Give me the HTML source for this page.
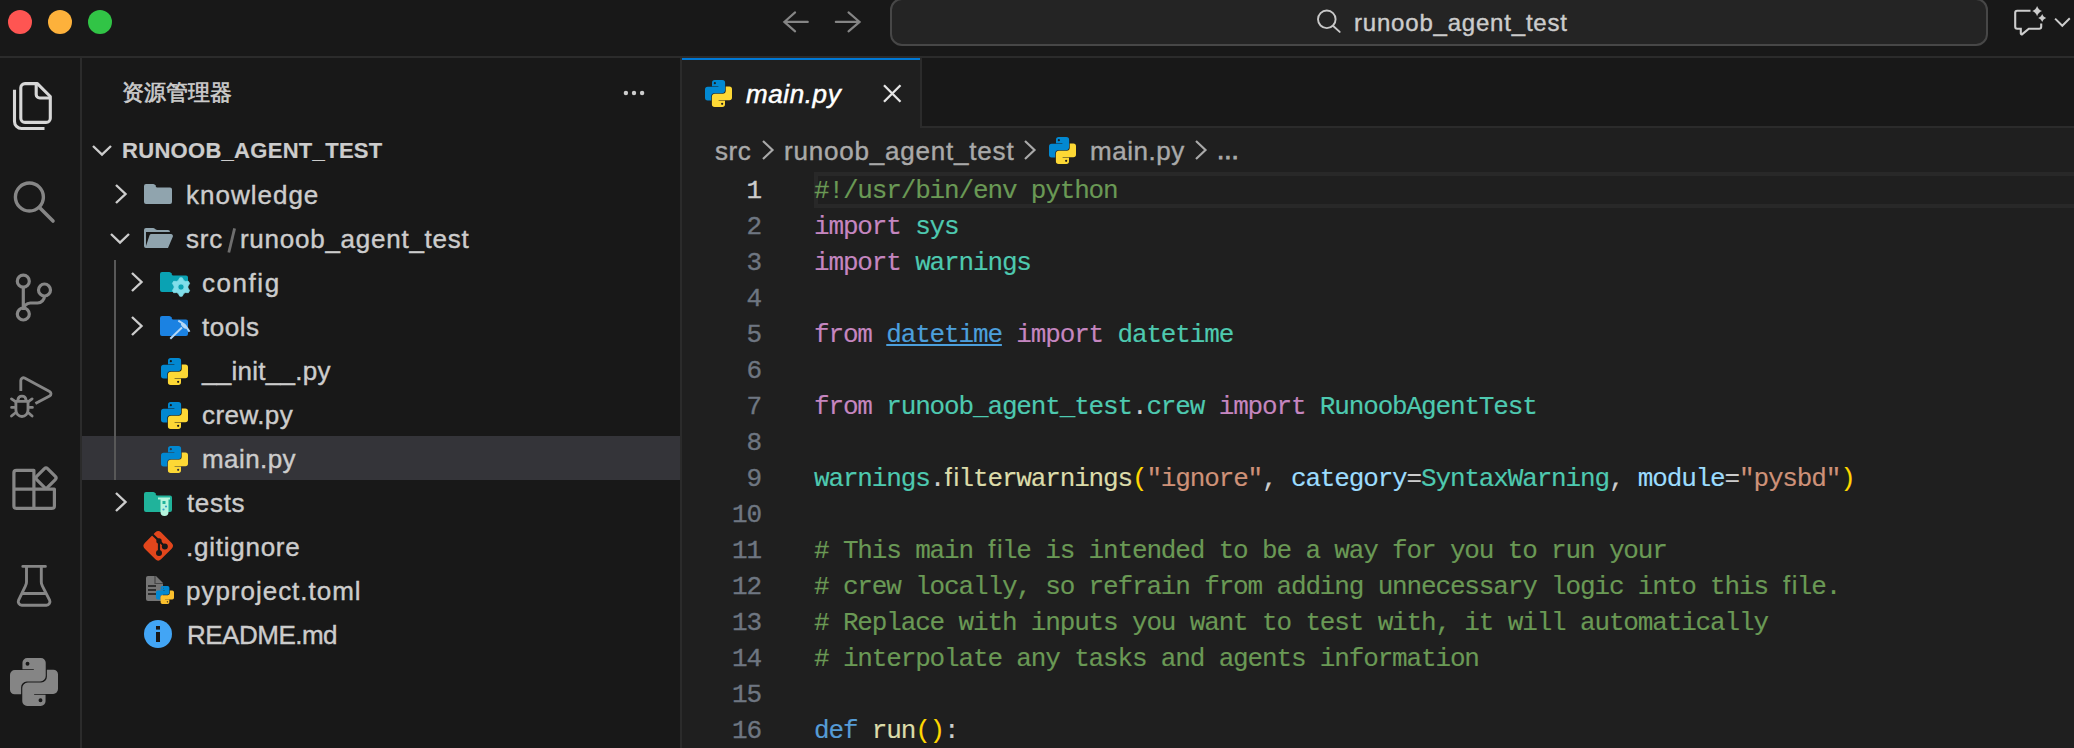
<!DOCTYPE html>
<html><head><meta charset="utf-8">
<style>
*{box-sizing:border-box;margin:0;padding:0}
html,body{width:2074px;height:748px;overflow:hidden;background:#181818}
body{position:relative;font-family:"Liberation Sans",sans-serif;color:#cccccc}
.abs{position:absolute}
svg{position:absolute;overflow:visible}
#titlebar{left:0;top:0;width:2074px;height:56px;background:#181818}
#tb-border{left:0;top:56px;width:2074px;height:2px;background:#2b2b2b}
.light{position:absolute;width:24px;height:24px;border-radius:50%;top:10px}
#cc{left:890px;top:-2px;width:1098px;height:48px;border:2px solid #474747;border-radius:12px;background:#242424}
#cc-text{left:1354px;top:6px;font-size:24px;line-height:34px;color:#cccccc;letter-spacing:0.8px;-webkit-text-stroke:0.4px #cccccc}
#actbar{left:0;top:58px;width:80px;height:690px;background:#181818}
#act-border{left:80px;top:58px;width:2px;height:690px;background:#2b2b2b}
#sidebar{left:82px;top:58px;width:598px;height:690px;background:#181818}
#side-border{left:680px;top:58px;width:2px;height:690px;background:#2b2b2b}
#editor{left:682px;top:58px;width:1392px;height:690px;background:#1f1f1f}
#tabbar{left:682px;top:58px;width:1392px;height:68px;background:#181818}
#tabbar-border{left:920px;top:126px;width:1154px;height:2px;background:#2b2b2b}
#tab{left:682px;top:58px;width:238px;height:70px;background:#1f1f1f}
#tab-top{left:682px;top:58px;width:238px;height:2px;background:#0078d4}
#tab-right{left:920px;top:58px;width:2px;height:68px;background:#2b2b2b}
.row{position:absolute;left:82px;width:598px;height:44px}
.lbl{position:absolute;font-size:26px;line-height:44px;top:0;padding-top:1px;letter-spacing:0.75px;color:#cccccc;white-space:pre;-webkit-text-stroke:0.4px currentColor}
.ui{-webkit-text-stroke:0.4px currentColor}
.code{position:absolute;left:814px;padding-top:1px;-webkit-text-stroke:0.15px currentColor;font-family:"Liberation Mono",monospace;font-size:26px;letter-spacing:-1.15px;line-height:36px;white-space:pre;color:#cccccc}
.ln{position:absolute;left:700px;width:61px;padding-top:1px;-webkit-text-stroke:0.35px currentColor;text-align:right;font-family:"Liberation Mono",monospace;font-size:26px;letter-spacing:-1.15px;line-height:36px;color:#6e7681}
.c{color:#6a9955}.k{color:#c586c0}.n{color:#4ec9b0}.f{color:#dcdcaa}.s{color:#ce9178}.p{color:#9cdcfe}.b{color:#ffd700}.d{color:#569cd6}.w{color:#cccccc}
.lnk{color:#4c9fdc;text-decoration:underline;text-underline-offset:2px;text-decoration-thickness:2px}
</style></head><body>
<div id="titlebar" class="abs"></div>
<div id="tb-border" class="abs"></div>
<div class="light" style="left:8px;background:#fe5552"></div>
<div class="light" style="left:48px;background:#fdb13b"></div>
<div class="light" style="left:88px;background:#31c446"></div>

<div id="actbar" class="abs"></div>
<div id="act-border" class="abs"></div>
<div id="sidebar" class="abs"></div>
<div id="side-border" class="abs"></div>
<div id="editor" class="abs"></div>
<div id="tabbar" class="abs"></div>
<div id="tabbar-border" class="abs"></div>
<div id="tab" class="abs"></div>
<div id="tab-top" class="abs"></div>
<div id="tab-right" class="abs"></div>

<div id="cc" class="abs"></div>
<div id="cc-text" class="abs">runoob_agent_test</div>

<!-- SIDEBAR -->
<div class="abs ui" style="left:122px;top:76px;font-size:22px;line-height:34px;color:#cccccc;-webkit-text-stroke:0.6px #cccccc">资源管理器</div>
<div class="abs ui" style="left:122px;top:129px;font-size:22px;line-height:44px;font-weight:bold;color:#cccccc;letter-spacing:0.3px;-webkit-text-stroke:0.2px #cccccc">RUNOOB_AGENT_TEST</div>

<div class="row" style="top:436px;background:#343439"></div>
<div class="abs" style="left:114px;top:260px;width:2px;height:220px;background:#585858"></div>

<div class="lbl" style="left:186px;top:172px;letter-spacing:1px">knowledge</div>
<div class="lbl" style="left:186px;top:216px">src<span style="display:inline-block;width:17px"></span>runoob_agent_test</div>
<div class="lbl" style="left:202px;top:260px;letter-spacing:1.55px">config</div>
<div class="lbl" style="left:202px;top:304px;letter-spacing:0.5px">tools</div>
<div class="lbl" style="left:202px;top:348px;letter-spacing:0.28px">__init__.py</div>
<div class="lbl" style="left:202px;top:392px;letter-spacing:0.42px">crew.py</div>
<div class="lbl" style="left:202px;top:436px;letter-spacing:0.42px">main.py</div>
<div class="lbl" style="left:187px;top:480px;letter-spacing:0.65px">tests</div>
<div class="lbl" style="left:186px;top:524px">.gitignore</div>
<div class="lbl" style="left:186px;top:568px;letter-spacing:0.98px">pyproject.toml</div>
<div class="lbl" style="left:187px;top:612px;letter-spacing:-0.5px">README.md</div>

<!-- EDITOR -->
<div class="abs" style="left:746px;top:77px;font-size:26px;line-height:34px;font-style:italic;color:#ffffff;letter-spacing:0.6px;-webkit-text-stroke:0.5px #ffffff">main.py</div>
<div class="abs ui" style="left:715px;top:129px;font-size:26px;line-height:44px;color:#a9a9a9;white-space:pre;letter-spacing:0.5px">src</div>
<div class="abs ui" style="left:784px;top:129px;font-size:26px;line-height:44px;color:#a9a9a9;white-space:pre;letter-spacing:0.8px">runoob_agent_test</div>
<div class="abs ui" style="left:1090px;top:129px;font-size:26px;line-height:44px;color:#a9a9a9;white-space:pre;letter-spacing:0.55px">main.py</div>
<div class="abs ui" style="left:1217px;top:128px;font-size:26px;line-height:44px;color:#a9a9a9;white-space:pre;letter-spacing:0px;-webkit-text-stroke:0.9px #a9a9a9">...</div>

<div class="abs" style="left:814px;top:172px;width:1260px;height:36px;border:4px solid #282828;border-right:none"></div>

<div class="ln" style="top:172px;color:#cccccc">1</div>
<div class="ln" style="top:208px">2</div>
<div class="ln" style="top:244px">3</div>
<div class="ln" style="top:280px">4</div>
<div class="ln" style="top:316px">5</div>
<div class="ln" style="top:352px">6</div>
<div class="ln" style="top:388px">7</div>
<div class="ln" style="top:424px">8</div>
<div class="ln" style="top:460px">9</div>
<div class="ln" style="top:496px">10</div>
<div class="ln" style="top:532px">11</div>
<div class="ln" style="top:568px">12</div>
<div class="ln" style="top:604px">13</div>
<div class="ln" style="top:640px">14</div>
<div class="ln" style="top:676px">15</div>
<div class="ln" style="top:712px">16</div>

<div class="code" style="top:172px"><span class="c">#!/usr/bin/env python</span></div>
<div class="code" style="top:208px"><span class="k">import</span> <span class="n">sys</span></div>
<div class="code" style="top:244px"><span class="k">import</span> <span class="n">warnings</span></div>
<div class="code" style="top:316px"><span class="k">from</span> <span class="lnk">datetime</span> <span class="k">import</span> <span class="n">datetime</span></div>
<div class="code" style="top:388px"><span class="k">from</span> <span class="n">runoob_agent_test</span><span class="w">.</span><span class="n">crew</span> <span class="k">import</span> <span class="n">RunoobAgentTest</span></div>
<div class="code" style="top:460px"><span class="n">warnings</span><span class="w">.</span><span class="f">ﬁlterwarnings</span><span class="b">(</span><span class="s">"ignore"</span><span class="w">, </span><span class="p">category</span><span class="w">=</span><span class="n">SyntaxWarning</span><span class="w">, </span><span class="p">module</span><span class="w">=</span><span class="s">"pysbd"</span><span class="b">)</span></div>
<div class="code" style="top:532px"><span class="c"># This main ﬁle is intended to be a way for you to run your</span></div>
<div class="code" style="top:568px"><span class="c"># crew locally, so refrain from adding unnecessary logic into this ﬁle.</span></div>
<div class="code" style="top:604px"><span class="c"># Replace with inputs you want to test with, it will automatically</span></div>
<div class="code" style="top:640px"><span class="c"># interpolate any tasks and agents information</span></div>
<div class="code" style="top:712px"><span class="d">def</span> <span class="f">run</span><span class="b">()</span><span class="w">:</span></div>
<svg style="left:225px;top:226px" width="14" height="28"><path d="M9.6 2.4L3.8 26.5" stroke="#6e6e6e" stroke-width="2.8"/></svg>
<svg style="left:92.0px;top:145.0px" width="20" height="11"><path d="M1 1L10.0 9.5L19 1" fill="none" stroke="#cccccc" stroke-width="2.4"/></svg>
<svg style="left:114.5px;top:184.0px" width="12" height="20"><path d="M1 1L10.5 10.0L1 19" fill="none" stroke="#cccccc" stroke-width="2.4"/></svg>
<svg style="left:110.0px;top:233.0px" width="20" height="11"><path d="M1 1L10.0 9.5L19 1" fill="none" stroke="#cccccc" stroke-width="2.4"/></svg>
<svg style="left:130.5px;top:272.0px" width="12" height="20"><path d="M1 1L10.5 10.0L1 19" fill="none" stroke="#cccccc" stroke-width="2.4"/></svg>
<svg style="left:130.5px;top:316.0px" width="12" height="20"><path d="M1 1L10.5 10.0L1 19" fill="none" stroke="#cccccc" stroke-width="2.4"/></svg>
<svg style="left:114.5px;top:492.0px" width="12" height="20"><path d="M1 1L10.5 10.0L1 19" fill="none" stroke="#cccccc" stroke-width="2.4"/></svg>
<svg style="left:142px;top:178px" width="32" height="32" viewBox="0 0 32 32"><path fill="#90a4ae" d="M13.844 7.536l-1.288-1.072A2 2 0 0 0 11.276 6H4a2 2 0 0 0-2 2v16a2 2 0 0 0 2 2h24a2 2 0 0 0 2-2V11.5a2 2 0 0 0-2-2H15.124a2 2 0 0 1-1.28-.464Z"/></svg>
<svg style="left:142px;top:222px" width="32" height="32" viewBox="0 0 32 32"><path fill="#90a4ae" d="M28.967 12H9.442a2 2 0 0 0-1.898 1.368L4 24V10h24a2 2 0 0 0-2-2H15.124a2 2 0 0 1-1.28-.464l-1.288-1.072A2 2 0 0 0 11.276 6H4a2 2 0 0 0-2 2v16a2 2 0 0 0 2 2h22l4.805-11.212A2 2 0 0 0 28.967 12Z"/></svg>
<svg style="left:158px;top:266px" width="32" height="32" viewBox="0 0 32 32"><path fill="#0aa2b3" d="M13.844 7.536l-1.288-1.072A2 2 0 0 0 11.276 6H4a2 2 0 0 0-2 2v16a2 2 0 0 0 2 2h24a2 2 0 0 0 2-2V11.5a2 2 0 0 0-2-2H15.124a2 2 0 0 1-1.28-.464Z"/><path fill="#80deea" stroke="#80deea" stroke-width="0.8" stroke-linejoin="round" d="M21.79 11.78 L24.21 11.78 L25.68 14.53 L27.26 15.45 L30.38 15.34 L31.59 17.44 L29.94 20.09 L29.94 21.91 L31.59 24.56 L30.38 26.66 L27.26 26.55 L25.68 27.47 L24.21 30.22 L21.79 30.22 L20.32 27.47 L18.74 26.55 L15.62 26.66 L14.41 24.56 L16.06 21.91 L16.06 20.09 L14.41 17.44 L15.62 15.34 L18.74 15.45 L20.32 14.53Z M26.1 21A3.1 3.1 0 1 0 19.9 21A3.1 3.1 0 1 0 26.1 21Z" fill-rule="evenodd"/></svg>
<svg style="left:158px;top:310px" width="32" height="32" viewBox="0 0 32 32"><path fill="#1b82e2" d="M13.844 7.536l-1.288-1.072A2 2 0 0 0 11.276 6H4a2 2 0 0 0-2 2v16a2 2 0 0 0 2 2h24a2 2 0 0 0 2-2V11.5a2 2 0 0 0-2-2H15.124a2 2 0 0 1-1.28-.464Z"/><path d="M12.3 28.8L24 17.5" stroke="#b3d7f7" stroke-width="2"/><path d="M20.3 10.6Q27.5 14.5 31.5 21.8" stroke="#b3d7f7" stroke-width="2" fill="none"/><ellipse cx="26" cy="15.6" rx="3.6" ry="2" transform="rotate(45 26 15.6)" fill="#b3d7f7"/></svg>
<svg style="left:161px;top:358px" width="27" height="27" viewBox="0 0 27 27"><path fill-rule="evenodd" fill="#0288d1" d="M7 2.7A2.7 2.7 0 0 1 9.7 0H17.4A2.7 2.7 0 0 1 20.1 2.7V10.1A3.1 3.1 0 0 1 17 13.2H9.45A3.2 3.2 0 0 0 6.25 16.4V20.4H2.6A2.6 2.6 0 0 1 0 17.8V9.5A2.7 2.7 0 0 1 2.7 6.8H13.4V6.3H7ZM9.85 2.1A1.1 1.1 0 1 0 9.85 4.3A1.1 1.1 0 1 0 9.85 2.1Z"/><path fill-rule="evenodd" fill="#fdd835" transform="rotate(180 13.5 13.5)" d="M7 2.7A2.7 2.7 0 0 1 9.7 0H17.4A2.7 2.7 0 0 1 20.1 2.7V10.1A3.1 3.1 0 0 1 17 13.2H9.45A3.2 3.2 0 0 0 6.25 16.4V20.4H2.6A2.6 2.6 0 0 1 0 17.8V9.5A2.7 2.7 0 0 1 2.7 6.8H13.4V6.3H7ZM9.85 2.1A1.1 1.1 0 1 0 9.85 4.3A1.1 1.1 0 1 0 9.85 2.1Z"/></svg>
<svg style="left:161px;top:402px" width="27" height="27" viewBox="0 0 27 27"><path fill-rule="evenodd" fill="#0288d1" d="M7 2.7A2.7 2.7 0 0 1 9.7 0H17.4A2.7 2.7 0 0 1 20.1 2.7V10.1A3.1 3.1 0 0 1 17 13.2H9.45A3.2 3.2 0 0 0 6.25 16.4V20.4H2.6A2.6 2.6 0 0 1 0 17.8V9.5A2.7 2.7 0 0 1 2.7 6.8H13.4V6.3H7ZM9.85 2.1A1.1 1.1 0 1 0 9.85 4.3A1.1 1.1 0 1 0 9.85 2.1Z"/><path fill-rule="evenodd" fill="#fdd835" transform="rotate(180 13.5 13.5)" d="M7 2.7A2.7 2.7 0 0 1 9.7 0H17.4A2.7 2.7 0 0 1 20.1 2.7V10.1A3.1 3.1 0 0 1 17 13.2H9.45A3.2 3.2 0 0 0 6.25 16.4V20.4H2.6A2.6 2.6 0 0 1 0 17.8V9.5A2.7 2.7 0 0 1 2.7 6.8H13.4V6.3H7ZM9.85 2.1A1.1 1.1 0 1 0 9.85 4.3A1.1 1.1 0 1 0 9.85 2.1Z"/></svg>
<svg style="left:161px;top:446px" width="27" height="27" viewBox="0 0 27 27"><path fill-rule="evenodd" fill="#0288d1" d="M7 2.7A2.7 2.7 0 0 1 9.7 0H17.4A2.7 2.7 0 0 1 20.1 2.7V10.1A3.1 3.1 0 0 1 17 13.2H9.45A3.2 3.2 0 0 0 6.25 16.4V20.4H2.6A2.6 2.6 0 0 1 0 17.8V9.5A2.7 2.7 0 0 1 2.7 6.8H13.4V6.3H7ZM9.85 2.1A1.1 1.1 0 1 0 9.85 4.3A1.1 1.1 0 1 0 9.85 2.1Z"/><path fill-rule="evenodd" fill="#fdd835" transform="rotate(180 13.5 13.5)" d="M7 2.7A2.7 2.7 0 0 1 9.7 0H17.4A2.7 2.7 0 0 1 20.1 2.7V10.1A3.1 3.1 0 0 1 17 13.2H9.45A3.2 3.2 0 0 0 6.25 16.4V20.4H2.6A2.6 2.6 0 0 1 0 17.8V9.5A2.7 2.7 0 0 1 2.7 6.8H13.4V6.3H7ZM9.85 2.1A1.1 1.1 0 1 0 9.85 4.3A1.1 1.1 0 1 0 9.85 2.1Z"/></svg>
<svg style="left:142px;top:486px" width="32" height="32" viewBox="0 0 32 32"><path fill="#20b39b" d="M13.844 7.536l-1.288-1.072A2 2 0 0 0 11.276 6H4a2 2 0 0 0-2 2v16a2 2 0 0 0 2 2h24a2 2 0 0 0 2-2V11.5a2 2 0 0 0-2-2H15.124a2 2 0 0 1-1.28-.464Z"/><path fill="#b6f5dd" d="M16 11.5H28V13.5H26.5V26A4 4 0 0 1 18.5 26V13.5H16Z"/><rect x="20.5" y="15" width="3" height="3" fill="#20b39b"/><circle cx="24" cy="20.5" r="1.1" fill="#3aa0c8"/><circle cx="21.5" cy="23.5" r="1.1" fill="#3aa0c8"/></svg>
<svg style="left:142px;top:530px" width="32" height="32" viewBox="0 0 32 32"><rect x="4.7" y="4.3" width="23" height="23" rx="4" fill="#e2461c" transform="rotate(45 16.2 15.8)"/><path d="M10.5 4.5L17 10.8V23" stroke="#181818" stroke-width="2.2" fill="none"/><path d="M17 10.8L22.8 16.5" stroke="#181818" stroke-width="2.2"/><circle cx="17" cy="11" r="2.7" fill="#181818"/><circle cx="17" cy="23" r="3" fill="#181818"/><circle cx="22.8" cy="16.5" r="3" fill="#181818"/></svg>
<svg style="left:142px;top:574px" width="32" height="32" viewBox="0 0 32 32"><path fill="#757575" d="M6 2H14L21 9V25A2 2 0 0 1 19 27H6A2 2 0 0 1 4 25V4A2 2 0 0 1 6 2Z"/><path d="M6 12H14M6 16H14M6 20H14" stroke="#181818" stroke-width="1.6"/><path d="M13 2V9.5H21" stroke="#181818" stroke-width="1.2" fill="none" opacity="0.5"/></svg>
<svg style="left:156px;top:586px" width="18" height="18" viewBox="0 0 27 27"><path fill-rule="evenodd" fill="#0288d1" d="M7 2.7A2.7 2.7 0 0 1 9.7 0H17.4A2.7 2.7 0 0 1 20.1 2.7V10.1A3.1 3.1 0 0 1 17 13.2H9.45A3.2 3.2 0 0 0 6.25 16.4V20.4H2.6A2.6 2.6 0 0 1 0 17.8V9.5A2.7 2.7 0 0 1 2.7 6.8H13.4V6.3H7ZM9.85 2.1A1.1 1.1 0 1 0 9.85 4.3A1.1 1.1 0 1 0 9.85 2.1Z"/><path fill-rule="evenodd" fill="#fbc02d" transform="rotate(180 13.5 13.5)" d="M7 2.7A2.7 2.7 0 0 1 9.7 0H17.4A2.7 2.7 0 0 1 20.1 2.7V10.1A3.1 3.1 0 0 1 17 13.2H9.45A3.2 3.2 0 0 0 6.25 16.4V20.4H2.6A2.6 2.6 0 0 1 0 17.8V9.5A2.7 2.7 0 0 1 2.7 6.8H13.4V6.3H7ZM9.85 2.1A1.1 1.1 0 1 0 9.85 4.3A1.1 1.1 0 1 0 9.85 2.1Z"/></svg>
<svg style="left:142px;top:618px" width="32" height="32" viewBox="0 0 32 32"><circle cx="16" cy="16" r="14" fill="#42a5f5"/><rect x="14" y="8" width="4" height="3.6" fill="#181818"/><rect x="14" y="14" width="4" height="10" fill="#181818"/></svg>
<svg style="left:622px;top:86px" width="26" height="14"><circle cx="3.9" cy="7" r="2.2" fill="#cccccc"/><circle cx="12" cy="7" r="2.2" fill="#cccccc"/><circle cx="20.1" cy="7" r="2.2" fill="#cccccc"/></svg>
<svg style="left:704.5px;top:79.5px" width="27" height="27" viewBox="0 0 27 27"><path fill-rule="evenodd" fill="#0288d1" d="M7 2.7A2.7 2.7 0 0 1 9.7 0H17.4A2.7 2.7 0 0 1 20.1 2.7V10.1A3.1 3.1 0 0 1 17 13.2H9.45A3.2 3.2 0 0 0 6.25 16.4V20.4H2.6A2.6 2.6 0 0 1 0 17.8V9.5A2.7 2.7 0 0 1 2.7 6.8H13.4V6.3H7ZM9.85 2.1A1.1 1.1 0 1 0 9.85 4.3A1.1 1.1 0 1 0 9.85 2.1Z"/><path fill-rule="evenodd" fill="#fdd835" transform="rotate(180 13.5 13.5)" d="M7 2.7A2.7 2.7 0 0 1 9.7 0H17.4A2.7 2.7 0 0 1 20.1 2.7V10.1A3.1 3.1 0 0 1 17 13.2H9.45A3.2 3.2 0 0 0 6.25 16.4V20.4H2.6A2.6 2.6 0 0 1 0 17.8V9.5A2.7 2.7 0 0 1 2.7 6.8H13.4V6.3H7ZM9.85 2.1A1.1 1.1 0 1 0 9.85 4.3A1.1 1.1 0 1 0 9.85 2.1Z"/></svg>
<svg style="left:880px;top:82px" width="24" height="23"><path d="M4 3.2L20.5 19.8M20.5 3.2L4 19.8" stroke="#e6e6e6" stroke-width="2.3"/></svg>
<svg style="left:761.5px;top:140.0px" width="12" height="20"><path d="M1 1L10.5 10.0L1 19" fill="none" stroke="#a9a9a9" stroke-width="2.2"/></svg>
<svg style="left:1024.0px;top:140.0px" width="12" height="20"><path d="M1 1L10.5 10.0L1 19" fill="none" stroke="#a9a9a9" stroke-width="2.2"/></svg>
<svg style="left:1194.5px;top:140.0px" width="12" height="20"><path d="M1 1L10.5 10.0L1 19" fill="none" stroke="#a9a9a9" stroke-width="2.2"/></svg>
<svg style="left:1048.8px;top:136.8px" width="27" height="27" viewBox="0 0 27 27"><path fill-rule="evenodd" fill="#0288d1" d="M7 2.7A2.7 2.7 0 0 1 9.7 0H17.4A2.7 2.7 0 0 1 20.1 2.7V10.1A3.1 3.1 0 0 1 17 13.2H9.45A3.2 3.2 0 0 0 6.25 16.4V20.4H2.6A2.6 2.6 0 0 1 0 17.8V9.5A2.7 2.7 0 0 1 2.7 6.8H13.4V6.3H7ZM9.85 2.1A1.1 1.1 0 1 0 9.85 4.3A1.1 1.1 0 1 0 9.85 2.1Z"/><path fill-rule="evenodd" fill="#fdd835" transform="rotate(180 13.5 13.5)" d="M7 2.7A2.7 2.7 0 0 1 9.7 0H17.4A2.7 2.7 0 0 1 20.1 2.7V10.1A3.1 3.1 0 0 1 17 13.2H9.45A3.2 3.2 0 0 0 6.25 16.4V20.4H2.6A2.6 2.6 0 0 1 0 17.8V9.5A2.7 2.7 0 0 1 2.7 6.8H13.4V6.3H7ZM9.85 2.1A1.1 1.1 0 1 0 9.85 4.3A1.1 1.1 0 1 0 9.85 2.1Z"/></svg>
<svg style="left:782px;top:11px" width="28" height="24"><path d="M2.3 10.9H25.8M13.1 1.4L2.3 10.9L13.1 20.4" fill="none" stroke="#858585" stroke-width="2.1" stroke-linecap="round"/></svg>
<svg style="left:834px;top:11px" width="28" height="24"><path d="M1.8 10.9H25.6M14.5 1.4L25.6 10.9L14.5 20.4" fill="none" stroke="#858585" stroke-width="2.1" stroke-linecap="round"/></svg>
<svg style="left:1316px;top:9px" width="26" height="26"><circle cx="10.8" cy="10.3" r="8.8" fill="none" stroke="#c8c8c8" stroke-width="1.9"/><path d="M17.2 17L23.7 22.9" stroke="#c8c8c8" stroke-width="1.9" stroke-linecap="round"/></svg>
<svg style="left:2008px;top:2px" width="66" height="40"><path d="M22.5 8.8H9.2A2 2 0 0 0 7.2 10.8V24.7A2 2 0 0 0 9.2 26.7H12.8V31.4A0.9 0.9 0 0 0 14.3 32.1L20.8 26.7H31.2A2 2 0 0 0 33.2 24.7V21.4" fill="none" stroke="#cccccc" stroke-width="2.1"/><path d="M29.1 4.00C29.98 6.60 31.60 8.22 34.00 9.1C31.60 9.97 29.98 11.60 29.1 14.20C28.23 11.60 26.60 9.97 24.20 9.1C26.60 8.22 28.23 6.60 29.1 4.00Z" fill="#cccccc"/><path d="M34.2 12.00C34.90 14.00 36.20 15.30 38.20 16C36.20 16.70 34.90 18.00 34.2 20.00C33.50 18.00 32.20 16.70 30.20 16C32.20 15.30 33.50 14.00 34.2 12.00Z" fill="#cccccc"/><path d="M47.1 16.6L54.3 23.8L61.8 16.3" fill="none" stroke="#cccccc" stroke-width="2"/></svg>
<svg style="left:10px;top:80px" width="46" height="52"><path d="M15 3.6H27.4L40.3 16.5V38.2A4.2 4.2 0 0 1 36.1 42.4H15A4.2 4.2 0 0 1 10.8 38.2V7.8A4.2 4.2 0 0 1 15 3.6Z" fill="none" stroke="#d7d7d7" stroke-width="3.1" stroke-linejoin="round"/><path d="M26.2 4V14.5A3.5 3.5 0 0 0 29.7 18H40.3" fill="none" stroke="#d7d7d7" stroke-width="3.1"/><path d="M4.5 9.8V41.5A7 7 0 0 0 11.5 48.5H34.5" fill="none" stroke="#d7d7d7" stroke-width="3.1"/></svg>
<svg style="left:10px;top:178px" width="48" height="48"><circle cx="19.4" cy="19" r="14" fill="none" stroke="#868686" stroke-width="3.4"/><path d="M29.5 29.5L43 43" stroke="#868686" stroke-width="3.6" stroke-linecap="round"/></svg>
<svg style="left:10px;top:270px" width="48" height="56"><circle cx="13.3" cy="11.2" r="6" fill="none" stroke="#868686" stroke-width="3.2"/><circle cx="13.3" cy="44" r="6" fill="none" stroke="#868686" stroke-width="3.2"/><circle cx="34.5" cy="20" r="6" fill="none" stroke="#868686" stroke-width="3.2"/><path d="M13.3 17.2V38M34.5 26A7 7 0 0 1 27.5 33H20.3A7 7 0 0 0 13.3 40" fill="none" stroke="#868686" stroke-width="3.2"/></svg>
<svg style="left:8px;top:372px" width="48" height="52"><path d="M12.8 19V8.4A2.6 2.6 0 0 1 16.6 6.1L41.6 19.5A2.6 2.6 0 0 1 41.6 24.1L27.4 31.6" fill="none" stroke="#868686" stroke-width="2.85" stroke-linejoin="round"/><path d="M7.9 29.3H20V38A6.05 6.5 0 0 1 7.9 38Z M9.9 29.3V27.8A4.1 4.3 0 0 1 18 27.8V29.3" fill="none" stroke="#868686" stroke-width="2.85" stroke-linejoin="round"/><path d="M3.5 26.9L7.2 29.4M24.1 26.9L20.7 29.4M3.6 35.4H6.5M21.4 35.4H24.4M3.5 44L7.2 41M24.1 44L20.7 41" stroke="#868686" stroke-width="2.85" stroke-linecap="round" fill="none"/></svg>
<svg style="left:10px;top:462px" width="50" height="52"><path d="M3.9 10.8A2.5 2.5 0 0 1 6.4 8.3H23.9V46.4H6.4A2.5 2.5 0 0 1 3.9 43.9Z M3.9 27.2H44.4V43.9A2.5 2.5 0 0 1 41.9 46.4H23.9" fill="none" stroke="#868686" stroke-width="3.2" stroke-linejoin="round"/><rect x="28.3" y="8.3" width="15.4" height="15.4" rx="2.2" transform="rotate(45 36 16)" fill="none" stroke="#868686" stroke-width="3.2"/></svg>
<svg style="left:10px;top:560px" width="48" height="50"><path d="M12.8 6.4H35.4M16.5 6.4V22Q16.5 24 15.5 25.8L8.6 40.2A3.5 3.5 0 0 0 11.8 45.2H36.4A3.5 3.5 0 0 0 39.6 40.2L32.3 25.8Q31.3 24 31.3 22V6.4M13 33.5H35.3" fill="none" stroke="#868686" stroke-width="2.9" stroke-linejoin="round" stroke-linecap="round"/></svg>
<svg style="left:10px;top:658px" width="48" height="48" viewBox="0 0 27 27"><path fill-rule="evenodd" fill="#858585" d="M7 2.7A2.7 2.7 0 0 1 9.7 0H17.4A2.7 2.7 0 0 1 20.1 2.7V10.1A3.1 3.1 0 0 1 17 13.2H9.45A3.2 3.2 0 0 0 6.25 16.4V20.4H2.6A2.6 2.6 0 0 1 0 17.8V9.5A2.7 2.7 0 0 1 2.7 6.8H13.4V6.3H7ZM9.85 2.1A1.1 1.1 0 1 0 9.85 4.3A1.1 1.1 0 1 0 9.85 2.1Z"/><path fill-rule="evenodd" fill="#858585" transform="rotate(180 13.5 13.5)" d="M7 2.7A2.7 2.7 0 0 1 9.7 0H17.4A2.7 2.7 0 0 1 20.1 2.7V10.1A3.1 3.1 0 0 1 17 13.2H9.45A3.2 3.2 0 0 0 6.25 16.4V20.4H2.6A2.6 2.6 0 0 1 0 17.8V9.5A2.7 2.7 0 0 1 2.7 6.8H13.4V6.3H7ZM9.85 2.1A1.1 1.1 0 1 0 9.85 4.3A1.1 1.1 0 1 0 9.85 2.1Z"/></svg>
</body></html>
